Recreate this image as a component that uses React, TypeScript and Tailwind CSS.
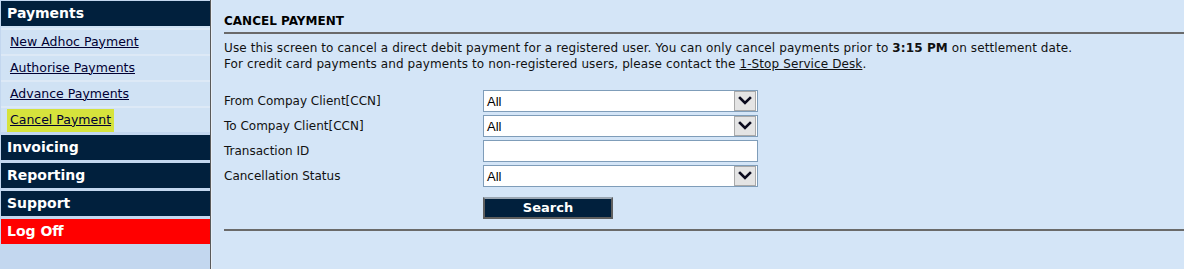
import React from 'react';

const font = { fontFamily: '"DejaVu Sans", Verdana, sans-serif' };

const subItems = [
  { label: 'New Adhoc Payment', active: false },
  { label: 'Authorise Payments', active: false },
  { label: 'Advance Payments', active: false },
  { label: 'Cancel Payment', active: true },
];

const Chevron = () => (
  <svg width="14" height="10" viewBox="0 0 14 10">
    <path d="M2 2 L7 7 L12 2" fill="none" stroke="#0b0b1e" strokeWidth="2.6" strokeLinecap="square" />
  </svg>
);

const SelectBox: React.FC<{ value: string }> = ({ value }) => (
  <div className="flex items-center w-[275px] h-[22px] bg-white border border-[#7f9db9]">
    <span className="flex-1 pl-[3px] text-[13px] text-black leading-none" style={{ fontFamily: '"Liberation Sans", Arial, sans-serif' }}>
      {value}
    </span>
    <div className="w-[22px] h-[20px] mr-[1px] flex items-center justify-center bg-[#e4e4e4] border border-[#a9a9a9]">
      <Chevron />
    </div>
  </div>
);

const NavHeader: React.FC<{ label: string; red?: boolean }> = ({ label, red }) => (
  <div className={`h-[25px] ml-[1px] flex items-center pl-[6px] text-white font-bold text-[14px] ${red ? 'bg-[#ff0000]' : 'bg-[#01203d]'}`}>
    {label}
  </div>
);

export default function App() {
  return (
    <div className="flex w-[1184px] h-[269px] bg-[#d4e5f7] text-[12px] text-[#111]" style={font}>
      {/* Sidebar */}
      <div className="w-[211px] shrink-0 bg-[#c3d7ef] border-r border-[#5a5a5a] pt-[1px]">
        <NavHeader label="Payments" />
        <div className="bg-[#d0e2f4] ml-[1px] pt-[2px]">
          {subItems.map(item => (
            <div key={item.label} className="h-[26px] border-t-2 border-[#dde9f6] flex items-center pl-[6px]">
              <span className={`px-[3px] h-[23px] flex items-center underline text-[#000033] text-[12.5px] ${item.active ? 'bg-[#d6e33c]' : ''}`}>
                {item.label}
              </span>
            </div>
          ))}
        </div>
        <div className="flex flex-col gap-[3px] pt-[3px]">
          <NavHeader label="Invoicing" />
          <NavHeader label="Reporting" />
          <NavHeader label="Support" />
          <NavHeader label="Log Off" red />
        </div>
      </div>

      {/* Main */}
      <div className="flex-1 border-l border-[#e6eef8] pl-[12px] pt-[13px]">
        <h1 className="font-bold text-[12px] text-black leading-[16px]">CANCEL PAYMENT</h1>
        <div className="mt-[3px] border-t-2 border-[#6a6a6a] h-[2px] bg-[#e8e8e8]" />
        <p className="mt-[6px] leading-[16px] text-[#111] tracking-[0.1px]">
          Use this screen to cancel a direct debit payment for a registered user. You can only cancel payments prior to <b>3:15 PM</b> on settlement date.
          <br />
          For credit card payments and payments to non-registered users, please contact the <span className="underline">1-Stop Service Desk</span>.
        </p>

        <div className="mt-[18px] grid grid-cols-[259px_275px] gap-y-[3px] items-center">
          <span>From Compay Client[CCN]</span>
          <SelectBox value="All" />
          <span>To Compay Client[CCN]</span>
          <SelectBox value="All" />
          <span>Transaction ID</span>
          <div className="w-[275px] h-[22px] bg-white border border-[#7f9db9]" />
          <span>Cancellation Status</span>
          <SelectBox value="All" />
          <span />
          <div className="mt-[7px] w-[130px] h-[22px] bg-[#01203d] border-2 border-[#5f5f5f] border-t-[#9aa6b2] flex items-center justify-center text-white font-bold text-[13px]">
            <span>Search</span>
          </div>
        </div>

        <div className="mt-[10px] border-t-2 border-[#6a6a6a] h-[2px] bg-[#e8e8e8]" />
      </div>
    </div>
  );
}
